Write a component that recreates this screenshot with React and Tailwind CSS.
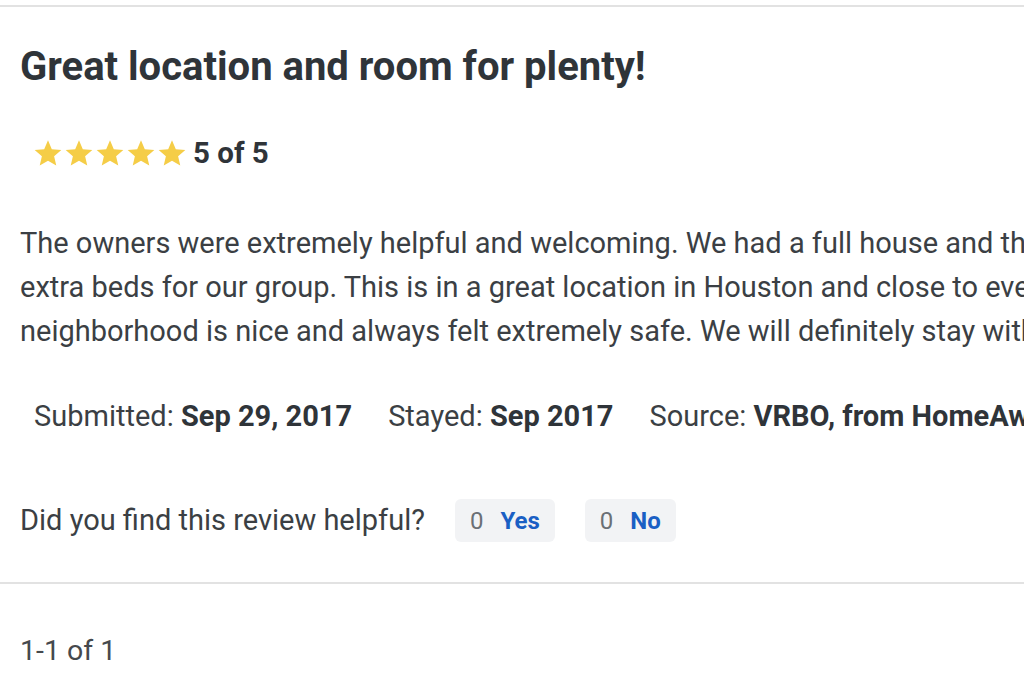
const Star = () => (
  <svg viewBox="0 0 24 24" className="w-[32px] h-[32px] -mx-[0.5px]" fill="#f5cd47">
    <path d="M12 2.5l2.85 6.6 7.15.62-5.42 4.72 1.62 7.01L12 17.72l-6.2 3.73 1.62-7.01L2 9.72l7.15-.62z" />
  </svg>
)

const HelpfulButton = ({ count, label }) => (
  <button className="flex items-center gap-[17px] h-[43px] px-[15px] rounded-[6px] bg-[#f2f3f5] text-[24px]">
    <span className="text-[#6b7075]">{count}</span>
    <span className="font-bold text-[#1a5fc4]">{label}</span>
  </button>
)

export default function App() {
  return (
    <div className="w-full h-[683px] overflow-hidden bg-white font-['Roboto',sans-serif] text-[#3b3f44]">
      <div className="mt-[5px] border-t-2 border-[#e2e2e2]" />
      <div className="px-[20px]">
        <h2 className="pt-[36px] text-[40px] leading-[48px] font-bold text-[#2f3439] whitespace-nowrap">
          Great location and room for plenty!
        </h2>

        <div className="mt-[42px] flex items-center pl-[12px] h-[40px]">
          <div className="flex items-center">
            <Star />
            <Star />
            <Star />
            <Star />
            <Star />
          </div>
          <span className="ml-[6px] text-[29.5px] font-bold text-[#2f3439]">5 of 5</span>
        </div>

        <p className="mt-[48px] text-[29px] leading-[44px] whitespace-nowrap">
          The owners were extremely helpful and welcoming. We had a full house and they provided
          <br />
          extra beds for our group. This is in a great location in Houston and close to everything. The
          <br />
          neighborhood is nice and always felt extremely safe. We will definitely stay with them again.
        </p>

        <div className="mt-[43px] pl-[14px] flex items-center gap-[36px] text-[29px] leading-[40px] whitespace-nowrap">
          <span>
            Submitted: <b className="text-[#2f3439]">Sep 29, 2017</b>
          </span>
          <span>
            Stayed: <b className="text-[#2f3439]">Sep 2017</b>
          </span>
          <span>
            Source: <b className="text-[#2f3439]">VRBO, from HomeAway</b>
          </span>
        </div>

        <div className="mt-[63px] flex items-center whitespace-nowrap">
          <span className="text-[29px] leading-[43px]">Did you find this review helpful?</span>
          <div className="ml-[30px] flex items-center gap-[30px]">
            <HelpfulButton count="0" label="Yes" />
            <HelpfulButton count="0" label="No" />
          </div>
        </div>
      </div>

      <div className="mt-[40px] border-t-2 border-[#e2e2e2]" />

      <div className="px-[20px] pt-[47px] text-[28.5px] leading-[40px] text-[#45494d]">1-1 of 1</div>
    </div>
  )
}
